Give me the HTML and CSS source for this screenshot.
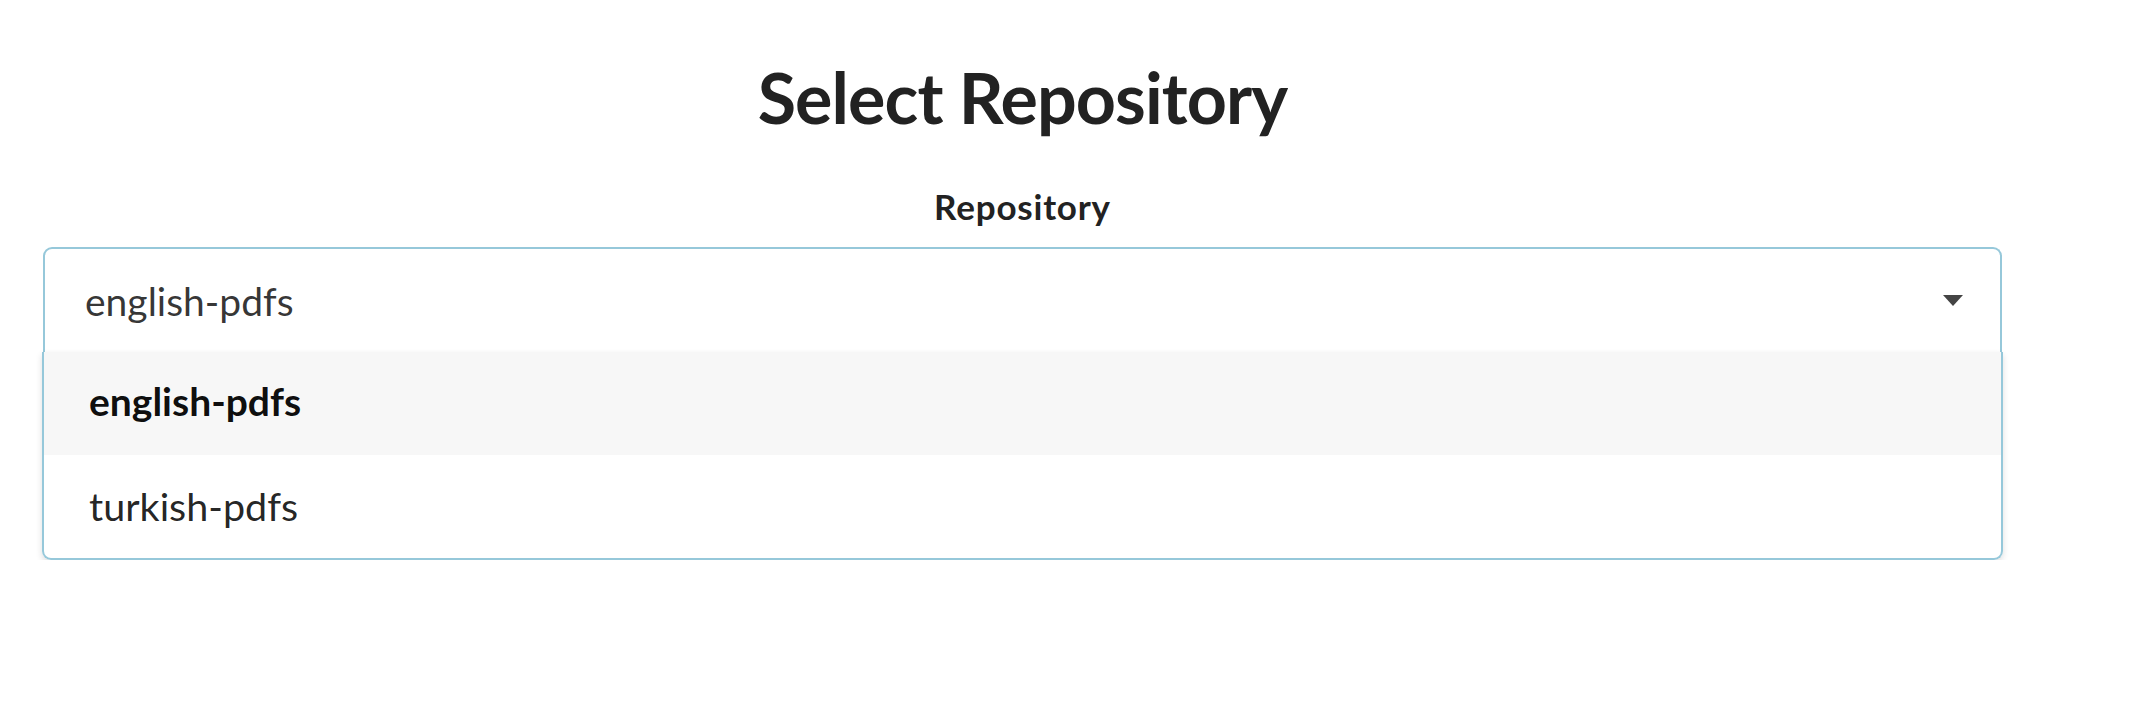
FILE: index.html
```html
<!DOCTYPE html>
<html lang="en">
<head>
<meta charset="utf-8">
<title>Select Repository</title>
<link rel="stylesheet" href="styles.css">
</head>
<body>
<div class="page">
  <h1 class="title">Select Repository</h1>
  <div class="field">
    <label class="field-label">Repository</label>
    <div class="dropdown">
      <div class="dropdown-head">
        <span class="dropdown-text">english-pdfs</span>
        <svg class="dropdown-icon" width="20" height="11" viewBox="0 0 20 11"><path d="M0 0H20L10 11Z" fill="#444"/></svg>
      </div>
      <div class="dropdown-menu">
        <div class="dropdown-item selected">english-pdfs</div>
        <div class="dropdown-item">turkish-pdfs</div>
      </div>
    </div>
  </div>
</div>
</body>
</html>
```

FILE: styles.css
```css
html, body {
  margin: 0;
  padding: 0;
  background: #ffffff;
}
body {
  font-family: Lato, "Open Sans", "Liberation Sans", sans-serif;
  color: rgba(0, 0, 0, 0.87);
}
.page {
  width: 1959px;
  margin-left: 43px;
  padding-top: 55px;
}
.title {
  margin: 0;
  font-size: 70px;
  line-height: 84px;
  font-weight: 700;
  letter-spacing: -0.9px;
  text-align: center;
  color: #222222;
}
.field {
  display: flex;
  flex-direction: column;
}
.field-label {
  margin-top: 46px;
  font-size: 35px;
  line-height: 42px;
  font-weight: 700;
  letter-spacing: 0.8px;
  text-align: center;
  color: #222222;
}
.dropdown {
  margin-top: 20px;
  display: flex;
  flex-direction: column;
}
.dropdown-head {
  display: flex;
  align-items: center;
  justify-content: space-between;
  height: 103px;
  padding: 0 37px 0 40px;
  border: 2px solid #96c8da;
  border-bottom: 0;
  border-radius: 9px 9px 0 0;
}
.dropdown-text {
  font-size: 39px;
  line-height: 46px;
  color: rgba(0, 0, 0, 0.8);
}
.dropdown-icon {
  display: block;
  margin-top: 0;
}
.dropdown-menu {
  margin: 0 -1px;
  border: 2px solid #96c8da;
  border-top: 0;
  border-radius: 0 0 9px 9px;
  box-shadow: 0 3px 6px 0 rgba(34, 36, 38, 0.15);
  overflow: hidden;
}
.dropdown-item {
  height: 103px;
  box-sizing: border-box;
  padding: 26px 46px 0 45px;
  font-size: 39px;
  line-height: 46px;
  color: rgba(0, 0, 0, 0.87);
}
.dropdown-item + .dropdown-item {
  padding-top: 28px;
  font-size: 39.5px;
}
.dropdown-item.selected {
  background: #f7f7f7;
  font-weight: 700;
  color: rgba(0, 0, 0, 0.95);
}
```
